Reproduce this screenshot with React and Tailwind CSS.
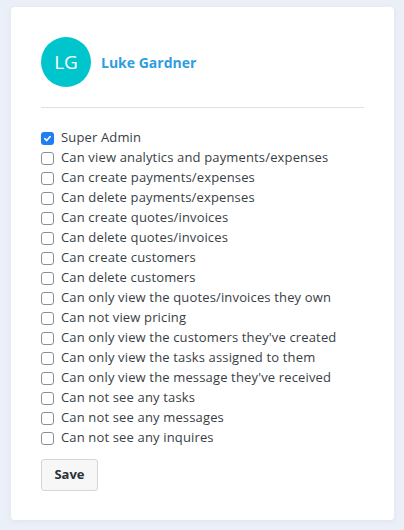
import React from "react";

const perms = [
  ["Super Admin", true],
  ["Can view analytics and payments/expenses", false],
  ["Can create payments/expenses", false],
  ["Can delete payments/expenses", false],
  ["Can create quotes/invoices", false],
  ["Can delete quotes/invoices", false],
  ["Can create customers", false],
  ["Can delete customers", false],
  ["Can only view the quotes/invoices they own", false],
  ["Can not view pricing", false],
  ["Can only view the customers they've created", false],
  ["Can only view the tasks assigned to them", false],
  ["Can only view the message they've received", false],
  ["Can not see any tasks", false],
  ["Can not see any messages", false],
  ["Can not see any inquires", false],
];

function Box({ checked }) {
  if (checked) {
    return (
      <span className="w-[13px] h-[13px] rounded-[3px] bg-[#1f7ff0] flex items-center justify-center shrink-0">
        <svg width="9" height="9" viewBox="0 0 10 10" fill="none">
          <path d="M2 5.2 L4.1 7.3 L8 2.8" stroke="white" strokeWidth="1.8" strokeLinecap="round" strokeLinejoin="round" />
        </svg>
      </span>
    );
  }
  return <span className="w-[13px] h-[13px] rounded-[3px] border border-[#8a8f95] bg-white shrink-0" />;
}

export default function App() {
  return (
    <div className="w-[404px] h-[530px] bg-[#ebf0f8] pt-[7px] pl-[11px] font-['Open_Sans',sans-serif]">
      <div className="w-[383px] h-[513px] bg-white rounded-[4px] shadow-[0_1px_6px_rgba(60,80,120,0.08)] px-[30px] pt-[30px]">
        <div className="flex items-center gap-[10px]">
          <div className="w-[50px] h-[50px] rounded-full bg-[#00c5cd] flex items-center justify-center text-white text-[19px]">LG</div>
          <div className="text-[#2f9de0] font-bold text-[14px]">Luke Gardner</div>
        </div>
        <div className="mt-[20px] h-px bg-[#dde1e6] w-[323px]" />
        <div className="mt-[20px] flex flex-col">
          {perms.map(([label, checked]) => (
            <label key={label} className="h-[20px] flex items-center gap-[7px] text-[13px] tracking-[0.15px] text-[#383e46]">
              <Box checked={checked} />
              <span>{label}</span>
            </label>
          ))}
        </div>
        <button className="mt-[11px] w-[57px] h-[32px] rounded-[3px] border border-[#d4d7da] bg-[#f7f7f7] text-[13px] font-bold text-[#2d3238]">Save</button>
      </div>
    </div>
  );
}
